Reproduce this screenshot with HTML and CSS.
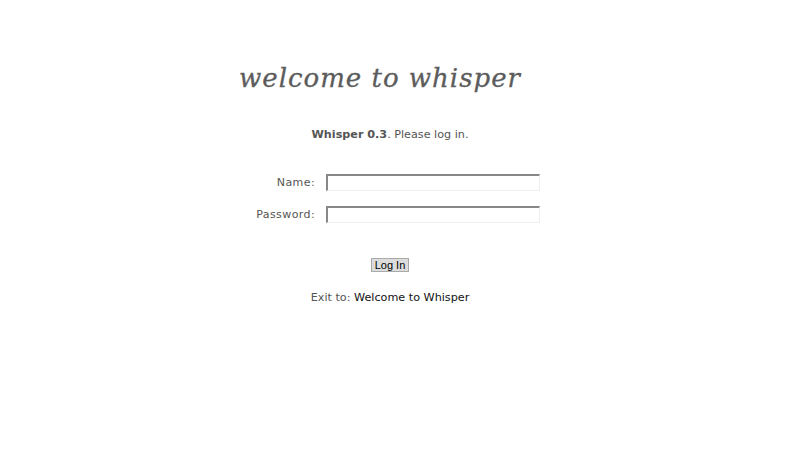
FILE: index.html
```html
<!DOCTYPE html>
<html>
<head>
<meta charset="utf-8">
<title>welcome to whisper</title>
<link rel="stylesheet" href="styles.css">
</head>
<body>
<div class="page">
  <h1 class="title">welcome to whisper</h1>
  <p class="intro"><b>Whisper 0.3</b>. Please log in.</p>
  <form class="login">
    <div class="row">
      <label class="label">Name:</label>
      <input class="field" type="text">
    </div>
    <div class="row">
      <label class="label">Password:</label>
      <input class="field" type="password">
    </div>
    <div class="actions">
      <button class="btn" type="button">Log In</button>
    </div>
  </form>
  <p class="exit">Exit to: <a class="link" href="#">Welcome to Whisper</a></p>
</div>
</body>
</html>
```
FILE: styles.css
```css
html, body {
  margin: 0;
  padding: 0;
  background: #fff;
}
body {
  font-family: "DejaVu Sans", Verdana, sans-serif;
  font-size: 11px;
  color: #555;
}
.page {
  width: 780px;
  display: flex;
  flex-direction: column;
  align-items: center;
  padding-top: 62px;
}
.title {
  margin: 0 20px 0 0;
  font-family: "DejaVu Serif", Georgia, serif;
  font-style: italic;
  font-weight: normal;
  font-size: 26px;
  letter-spacing: 1px;
  color: #5c5c5c;
  line-height: 32px;
  -webkit-text-stroke: 0.3px #5c5c5c;
}
.intro {
  margin: 34px 0 0 0;
  line-height: 14px;
  font-size: 11.2px;
}
.login {
  margin-top: 32px;
  display: flex;
  flex-direction: column;
  align-items: center;
}
.row {
  display: flex;
  align-items: center;
  gap: 11px;
  margin-bottom: 15px;
  margin-left: 15px;
}
.label {
  width: 60px;
  text-align: right;
  letter-spacing: 0.4px;
}
.field {
  box-sizing: border-box;
  width: 214px;
  height: 17px;
  margin: 0;
  padding: 0 2px;
  border-style: solid;
  border-width: 2px 1px 1px 2px;
  border-color: #888 #f0f0f0 #f0f0f0 #888;
  background: #fff;
  font: 11px "DejaVu Sans", sans-serif;
}
.actions {
  margin-top: 20px;
}
.btn {
  box-sizing: border-box;
  width: 38px;
  height: 14px;
  padding: 0;
  border: 1px solid #aaa;
  background: #dcdcdc;
  color: #000;
  font: 11px/12px "Liberation Sans", Arial, sans-serif;
}
.exit {
  margin: 19px 0 0 0;
  line-height: 14px;
  font-size: 11.2px;
}
.link {
  color: #111;
  text-decoration: none;
}
```
